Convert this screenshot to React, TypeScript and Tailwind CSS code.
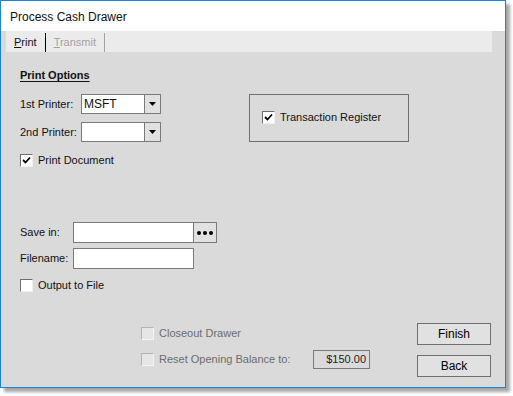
import React from "react";

const font = "font-['Liberation_Sans',Arial,sans-serif] text-[11px] leading-[13px]";

function Check({ checked, disabled }: { checked?: boolean; disabled?: boolean }) {
  return (
    <div
      className={
        "w-[13px] h-[13px] border flex items-center justify-center shrink-0 " +
        (disabled
          ? "bg-[#e6e6e6] border-[#b4b4b4] border-r-[#f4f4f4] border-b-[#f4f4f4]"
          : "bg-white border-[#6e6e6e] border-r-[#f0f0f0] border-b-[#f0f0f0]")
      }
    >
      {checked && (
        <svg width="9" height="9" viewBox="0 0 9 9">
          <path d="M1 4 L3.5 6.5 L8 1.5" stroke="#000" strokeWidth="1.8" fill="none" />
        </svg>
      )}
    </div>
  );
}

function Combo({ value }: { value?: string }) {
  return (
    <div className="flex w-[80px] h-[20px] border border-[#7a7a7a] bg-white">
      <div className="flex-1 pl-[2px] flex items-center text-[12px]">{value}</div>
      <div className="w-[16px] border-l border-[#7a7a7a] bg-[#e1e1e1] flex items-center justify-center">
        <svg width="7" height="4" viewBox="0 0 7 4">
          <path d="M0 0 H7 L3.5 4 Z" fill="#000" />
        </svg>
      </div>
    </div>
  );
}

export default function App() {
  return (
    <div className={"w-[513px] h-[396px] bg-white " + font + " text-[#111]"}>
      <div className="w-[506px] h-[388px] border border-[#1883d7] flex flex-col shadow-[4px_4px_3px_rgba(0,0,0,0.35)]">
        <div className="h-[30px] bg-white pl-[9px] pt-[9px] text-[12px] leading-[14px]">
          Process Cash Drawer
        </div>
        <div className="flex-1 bg-[#dadada] flex flex-col">
          <div className="ml-[5px] w-[486px] h-[21px] bg-[#ebebeb] flex items-end">
            <div className="flex items-center h-[19px] pl-[8px]">
              <span>
                <span className="underline">P</span>rint
              </span>
              <div className="w-px h-[19px] bg-black ml-[8px]" />
              <span className="ml-[8px] text-[#a3a3a3]">
                <span className="underline">T</span>ransmit
              </span>
              <div className="w-px h-[19px] bg-[#a3a3a3] ml-[8px]" />
            </div>
          </div>

          <div className="pl-[19px] flex flex-col">
            <div className="mt-[17px] font-bold underline underline-offset-2">Print Options</div>

            <div className="flex mt-[12px]">
              <div className="flex flex-col gap-[8px]">
                <div className="flex items-center">
                  <div className="w-[61px]">1st Printer:</div>
                  <Combo value="MSFT" />
                </div>
                <div className="flex items-center">
                  <div className="w-[61px]">2nd Printer:</div>
                  <Combo />
                </div>
              </div>
              <div className="ml-[88px] w-[160px] h-[48px] border border-[#6f6f6f] flex items-start pl-[12px] pt-[16px]">
                <div className="flex items-center gap-[5px]">
                  <Check checked />
                  <span>Transaction Register</span>
                </div>
              </div>
            </div>

            <div className="flex items-center gap-[5px] mt-[12px]">
              <Check checked />
              <span>Print Document</span>
            </div>

            <div className="flex items-center mt-[55px]">
              <div className="w-[53px]">Save in:</div>
              <div className="w-[121px] h-[21px] border border-[#7a7a7a] bg-white" />
              <div className="w-[23px] h-[21px] border border-l-0 border-[#7a7a7a] bg-[#e1e1e1] flex items-center justify-center gap-[2px]">
                <div className="w-[4px] h-[4px] rounded-full bg-black" />
                <div className="w-[4px] h-[4px] rounded-full bg-black" />
                <div className="w-[4px] h-[4px] rounded-full bg-black" />
              </div>
            </div>
            <div className="flex items-center mt-[5px]">
              <div className="w-[53px]">Filename:</div>
              <div className="w-[121px] h-[21px] border border-[#7a7a7a] bg-white" />
            </div>

            <div className="flex items-center gap-[5px] mt-[10px]">
              <Check />
              <span>Output to File</span>
            </div>

            <div className="flex mt-[31px]">
              <div className="ml-[121px] flex flex-col pt-[4px] text-[#6d6d6d]">
                <div className="flex items-center gap-[5px] h-[13px]">
                  <Check disabled />
                  <span>Closeout Drawer</span>
                </div>
                <div className="flex items-center mt-[10px] h-[19px]">
                  <Check disabled />
                  <span className="ml-[5px] w-[154px]">Reset Opening Balance to:</span>
                  <div className="w-[57px] h-[19px] border border-[#7a7a7a] flex items-center justify-end pr-[3px] text-[#222]">
                    $150.00
                  </div>
                </div>
              </div>
              <div className="ml-[47px] flex flex-col gap-[10px]">
                <div className="w-[74px] h-[22px] border border-[#6f6f6f] bg-[#e1e1e1] flex items-center justify-center text-[12px] text-black">
                  Finish
                </div>
                <div className="w-[74px] h-[22px] border border-[#6f6f6f] bg-[#e1e1e1] flex items-center justify-center text-[12px] text-black">
                  Back
                </div>
              </div>
            </div>
          </div>
        </div>
      </div>
    </div>
  );
}
